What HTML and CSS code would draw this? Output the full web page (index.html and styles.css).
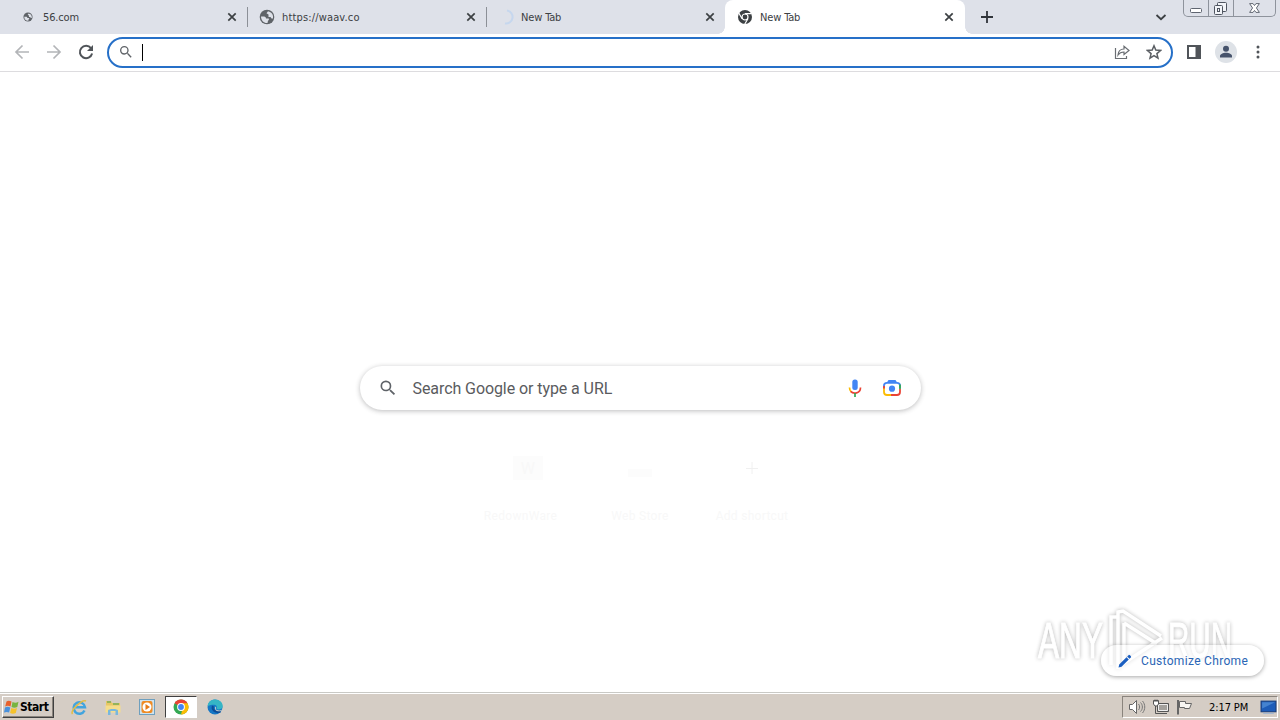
FILE: index.html
```html
<!doctype html>
<html lang="en">
<head>
  <meta charset="UTF-8">
  <meta name="viewport" content="width=device-width, initial-scale=1.0">
  <title>New Tab</title>
  <link rel="stylesheet" href="styles.css">
</head>
<body>

<svg class="defs" width="0" height="0">
  <symbol id="close" viewBox="0 0 16 16"><path d="M4.3 4.3l7.4 7.4M11.7 4.3l-7.4 7.4" stroke="#3c4043" stroke-width="1.7"/></symbol>
  <symbol id="globe" viewBox="0 0 16 16">
    <circle cx="8" cy="8" r="7.3" fill="#5f6368"/>
    <path d="M2 7.500h3c1.500 0 2 1 2 2h2.500c.8 0 .5 2-.5 2.200L8.500 14C5 14.300 2 11.500 2 7.500zM9 2.300L7.500 4.200 9.500 5.500V8h2l1 1.500H14V7c-.5-2.500-2-4-5-4.700z" fill="#dee1e9"/>
  </symbol>
  <symbol id="search" viewBox="0 0 24 24"><path fill="#5f6368" d="M15.5 14h-.79l-.28-.27A6.47 6.470 0 0 0 16 9.500 6.500 6.500 0 1 0 9.500 16c1.610 0 3.090-.59 4.230-1.570l.27.28v.79l5 4.990L20.490 19l-4.990-5zm-6 0A4.500 4.500 0 1 1 9.500 5a4.500 4.500 0 0 1 0 9z"/></symbol>
  <symbol id="arrow" viewBox="0 0 16 16"><path d="M15 8H2.500M8.500 1.500L2 8l6.500 6.500" fill="none" stroke="#b3b5b8" stroke-width="1.700"/></symbol>
</svg>

<header class="tabstrip">
  <div class="tab">
    <svg class="favicon small" viewBox="0 0 16 16"><use href="#globe"/></svg>
    <span>56.com</span>
    <svg class="close"><use href="#close"/></svg>
  </div>
  <div class="tab wide">
    <svg class="favicon"><use href="#globe"/></svg>
    <span>https://waav.co</span>
    <svg class="close"><use href="#close"/></svg>
  </div>
  <div class="tab last">
    <svg class="favicon" viewBox="0 0 16 16"><path d="M9 1.500a6.500 6.500 0 0 1-2 13" fill="none" stroke="#c6d7ee" stroke-width="2"/></svg>
    <span>New Tab</span>
    <svg class="close"><use href="#close"/></svg>
  </div>
  <div class="tab active">
    <svg class="favicon" viewBox="0 0 16 16">
      <circle cx="8" cy="8" r="7" fill="#3c4043"/>
      <circle cx="8" cy="8" r="3" fill="none" stroke="#fff" stroke-width="1.200"/>
      <path d="M8 4.600h6.500M5.100 9.700L1.800 4M10.900 9.700L7.700 15.300" stroke="#fff" stroke-width="1.200"/>
    </svg>
    <span>New Tab</span>
    <svg class="close"><use href="#close"/></svg>
  </div>
  <svg class="new-tab" viewBox="0 0 16 16"><path d="M8 2v12M2 8h12" stroke="#30343a" stroke-width="1.800"/></svg>
  <svg class="tab-search" viewBox="0 0 12 12"><path d="M1.500 4L6 8.200 10.500 4" fill="none" stroke="#3c4043" stroke-width="1.800"/></svg>
  <div class="window-controls">
    <svg viewBox="0 0 24 16"><rect x="6.500" y="8.500" width="11" height="4" rx="1" fill="#fff" stroke="#5f6570"/></svg>
    <svg viewBox="0 0 24 16"><g fill="#f2f4f8" stroke="#4f5560"><rect x="8.500" y="2.500" width="9" height="9" rx="1"/><rect x="5.500" y="5.500" width="8" height="9" rx="1"/><rect x="8.500" y="8.500" width="2" height="3"/></g></svg>
    <svg class="window-close" viewBox="0 0 42 16"><path d="M16 3.500h3.500L21 5.500l1.500-2H26L23 8l3 4.500h-3.500l-1.500-2-1.500 2H16L19 8z" fill="#fff" stroke="#5f6570"/></svg>
  </div>
</header>

<nav class="toolbar">
  <svg class="nav-icon" viewBox="0 0 16 16"><use href="#arrow"/></svg>
  <svg class="nav-icon forward" viewBox="0 0 16 16"><use href="#arrow"/></svg>
  <svg class="nav-icon" viewBox="0 0 16 16"><path d="M13 4.200A6.200 6.200 0 1 0 14.100 9.500" fill="none" stroke="#505459" stroke-width="2"/><path d="M15 1v6H9z" fill="#505459"/></svg>
  <div class="omnibox">
    <svg class="omni-search"><use href="#search"/></svg>
    <span class="caret"></span>
    <svg class="omni-icon share" viewBox="0 0 16 16"><path d="M1.500 4v10.500h11V12M4 11c.3-4 2.500-6 6-6V2.300L15 6.500l-5 4V8c-3 0-4.500.8-6 3z" fill="none" stroke="#6a6e73" stroke-width="1.200"/></svg>
    <svg class="omni-icon" viewBox="0 0 16 16"><path d="M8 1.800l1.800 4.300 4.700.4-3.600 3.100 1.100 4.600L8 11.700l-4 2.500 1.100-4.600-3.600-3.100 4.700-.4z" fill="none" stroke="#5a5e63" stroke-width="1.500"/></svg>
  </div>
  <svg class="side-panel" viewBox="0 0 16 16"><path d="M1 1h14v14H1zM3 3v10h6.500V3z" fill="#505459" fill-rule="evenodd"/></svg>
  <svg class="avatar" viewBox="0 0 22 22"><circle cx="11" cy="11" r="11" fill="#dee2e7"/><circle cx="11" cy="7.700" r="3" fill="#46536b"/><path d="M5 16.500v-1.500c0-2 3-3.300 6-3.300s6 1.300 6 3.300v1.500z" fill="#46536b"/></svg>
  <svg class="menu" viewBox="0 0 4 16"><g fill="#505459"><circle cx="2" cy="3" r="1.500"/><circle cx="2" cy="8" r="1.500"/><circle cx="2" cy="13" r="1.500"/></g></svg>
</nav>

<main class="page">
  <div class="searchbox">
    <svg class="search-icon"><use href="#search"/></svg>
    <span>Search Google or type a URL</span>
    <svg class="mic" viewBox="0 0 20 20">
      <rect x="7.300" y="1.500" width="5.400" height="10.500" rx="2.500" fill="#4285f4"/>
      <path d="M4.500 9.500c0 2.200.8 3.500 1.700 4.300" fill="none" stroke="#fbbc04" stroke-width="1.700"/>
      <path d="M5.700 13.400C8.500 16.500 15.500 15.500 15.500 9.500" fill="none" stroke="#ea4335" stroke-width="1.700"/>
      <path d="M10 15v4" stroke="#34a853" stroke-width="1.700"/>
    </svg>
    <svg class="lens" viewBox="0 0 20 20" fill="none" stroke-width="1.800">
      <path d="M2 10V7.500C2 5.500 3 4.800 5 4.800h10c2 0 3 .7 3 2.700V10" stroke="#4285f4"/>
      <path d="M6 4.300L7 2.900h6l1 1.400" fill="#4285f4" stroke="#4285f4"/>
      <path d="M18 6.500V11" stroke="#34a853"/>
      <path d="M2 8v3" stroke="#ea4335"/>
      <path d="M2 10.500V14c0 2.200 1 3 3 3h4" stroke="#fbbc04"/>
      <path d="M9 17h6c2 0 3-.8 3-3v-3" stroke="#ea4335"/>
      <circle cx="10" cy="10.700" r="3.100" fill="#4285f4"/>
    </svg>
  </div>
  <div class="shortcuts">
    <div class="shortcut"><div class="tile letter">W</div><span class="long">RedownWare</span></div>
    <div class="shortcut"><div class="tile"><i></i></div><span>Web Store</span></div>
    <div class="shortcut">
      <div class="tile"><svg width="14" height="14"><path d="M7 1v12M1 7.500h12" stroke="#f0f0f0"/></svg></div>
      <span>Add shortcut</span>
    </div>
  </div>
  <button class="customize">
    <svg viewBox="0 0 16 16"><path d="M1.500 14.500l.7-3L9.500 4.200l2.300 2.300-7.300 7.300zM10.200 3.500l1.600-1.600c.5-.5 2.800 1.800 2.300 2.300l-1.600 1.600z" fill="#1b5fc1"/></svg>
    Customize Chrome
  </button>
</main>

<footer class="taskbar">
  <button class="start">
    <svg viewBox="0 0 16 16">
      <path d="M2.500 2.500C4 1.300 5.500 1.500 7.500 2.500l-1 5C4.500 6.500 3 6.500 1.200 7.500z" fill="#e8612c"/>
      <path d="M8.500 3c2 1 4 1 6-.2l-1.200 5.200c-2 1-3.800 1-5.800 0z" fill="#77b43f"/>
      <path d="M1 8.500c2-1 3.500-.8 5.300 0l-1.200 5C3.500 12.700 2 12.700 0 13.500z" fill="#4a91dc"/>
      <path d="M7.300 9c2 1 3.800 1 5.700 0l-1.200 5c-2 1-3.700 1-5.700 0z" fill="#f5c22c"/>
    </svg>Start
  </button>
  <div class="launcher">
    <svg viewBox="0 0 18 18"><path d="M14.500 12.500A5.700 5.700 0 1 1 15 9.300H5" fill="none" stroke="#42a4de" stroke-width="2.500"/><path d="M2.500 16C-.5 13 12 1 16 3" fill="none" stroke="#e4bd45" stroke-width="1.500"/></svg>
  </div>
  <div class="launcher">
    <svg viewBox="0 0 18 18"><path d="M2 3h5l1 2h8v9H2z" fill="#e8c765"/><path d="M3 4h4M9 6h6" stroke="#78ad58" stroke-width="1.500"/><path d="M1.500 7.500h15v7h-15z" fill="#f5dd8c"/><path d="M4 17v-4.500c0-2 10-2 10 0V17h-2.500v-4h-5v4z" fill="#78b7dd"/></svg>
  </div>
  <div class="launcher">
    <svg viewBox="0 0 18 18"><rect x="1.500" y="1.500" width="15" height="15" fill="#cfe3ef" stroke="#6e9fbe"/><rect x="3.500" y="3" width="11" height="12" rx="2" fill="#ef8b24"/><circle cx="9" cy="9" r="4.500" fill="#fff"/><path d="M7.500 6v6l4.500-3z" fill="#e67a17"/></svg>
  </div>
  <div class="launcher running">
    <svg viewBox="0 0 18 18"><circle cx="9" cy="9" r="7.500" fill="#34a853"/><path d="M2.500 5.250A7.500 7.500 0 0 1 15.500 5.250L9 9z" fill="#ea4335"/><path d="M15.500 5.250A7.500 7.500 0 0 1 9 16.500L11 9 9 5.250z" fill="#fbbc04"/><circle cx="9" cy="9" r="3.900" fill="#fff"/><circle cx="9" cy="9" r="2.900" fill="#4285f4"/></svg>
  </div>
  <div class="launcher">
    <svg viewBox="0 0 18 18"><circle cx="9" cy="9" r="7.500" fill="#1677c5"/><path d="M1.600 8C2 3.500 5.500 1.400 9 1.400c4.500 0 8 3 7.700 6.800-.2 3.300-4.700 4-6.200 2.500C12 8 9.500 4.800 1.600 8z" fill="#35b5c5"/><path d="M7 8c-1.500 3.500 2 7 7.500 5.500" fill="none" stroke="#0c4b96" stroke-width="2"/><path d="M9.300 8.500c2 1-.5 2.500 1.500 3.500 2 .9 4.200.4 5.200-.5l-.5 1.200c-3 1.500-7.500.5-6.200-4.200z" fill="#d5cec6"/></svg>
  </div>
  <div class="tray">
    <svg viewBox="0 0 18 16"><path d="M1.500 5.500h3l4-4v13l-4-4h-3z" fill="#fff" stroke="#666"/><path d="M10.500 5c1.500 1.500 1.500 4.500 0 6M12.500 3.500c2.500 2.500 2.500 6.500 0 9M14.500 2c3 3.500 3 8.500 0 12" fill="none" stroke="#777"/></svg>
    <svg viewBox="0 0 18 16"><path d="M5.500 4.500h11v8h-11z" fill="#a4a19d" stroke="#555"/><path d="M6.500 5.500h9v6h-9z" fill="none" stroke="#eee"/><path d="M8 14.500h7M3.500 7v7.500H8" fill="none" stroke="#555"/><path d="M1.500 1.500h5V5l-1.500 2H3L1.500 5zM3 .5V3M5 .5V3" fill="#fff" stroke="#555"/></svg>
    <svg viewBox="0 0 18 16"><path d="M2 1v14.500" stroke="#666" stroke-width="2"/><path d="M3.500 2.500h6v2h6l-2 5H8.500v-1h-5z" fill="#f7f5f2" stroke="#666"/></svg>
    <time>2:17 PM</time>
    <svg class="show-desktop" viewBox="0 0 16 14"><rect x="1" y="1" width="14" height="10" fill="#1d5cb8" stroke="#173d7c"/><path d="M2 2h12L2 8z" fill="#4583d0"/><path d="M3 12.500h10" stroke="#9db5d2"/></svg>
  </div>
</footer>

<svg class="watermark" viewBox="0 0 200 72">
  <g font-family="Liberation Sans" font-size="50">
    <text x="2" y="53" textLength="65" lengthAdjust="spacingAndGlyphs">ANY</text>
    <text x="132" y="53" textLength="64" lengthAdjust="spacingAndGlyphs">RUN</text>
  </g>
  <path d="M75 60V12l7 0M82 64V7l5-1 38 25M88 18v40l38-25M88 18l33 21" fill="none" stroke-width="3.500"/>
</svg>

</body>
</html>
```
FILE: styles.css
```css
* {
  box-sizing: border-box;
}

body {
  margin: 0;
  width: 1280px;
  height: 720px;
  overflow: hidden;
  display: flex;
  flex-direction: column;
  background: #fff;
  font-family: "DejaVu Sans Condensed", "DejaVu Sans", sans-serif;
  font-size: 11px;
  color: #3c4043;
}

svg {
  display: block;
  flex: none;
}

.defs {
  position: absolute;
}

button {
  border: none;
  margin: 0;
  font: inherit;
}

.tabstrip {
  height: 34px;
  padding-left: 8px;
  display: flex;
  align-items: center;
  background: #dee1e9;
}

.tab {
  width: 239px;
  height: 20px;
  padding: 0 7px 0 12px;
  display: flex;
  align-items: center;
  box-shadow: 1px 0 #8c9097;
}

.tab span {
  flex: 1;
  margin-left: 7px;
  letter-spacing: -0.15px;
  white-space: nowrap;
}

.tab.wide span {
  letter-spacing: 0.15px;
}

.tab.last {
  box-shadow: none;
}

.tab.active {
  position: relative;
  height: 34px;
  width: 240px;
  padding-right: 8px;
  border-radius: 8px 8px 0 0;
  background: #fff;
  box-shadow: none;
}

/* rounded feet of the active tab */
.tab.active::before,
.tab.active::after {
  content: "";
  position: absolute;
  bottom: 0;
  width: 7px;
  height: 7px;
}

.tab.active::before {
  left: -7px;
  background: radial-gradient(circle at 0 0, transparent 6.5px, #fff 7px);
}

.tab.active::after {
  right: -7px;
  background: radial-gradient(circle at 100% 0, transparent 6.5px, #fff 7px);
}

.favicon,
.close {
  width: 16px;
  height: 16px;
}

.favicon.small {
  padding: 3px;
}

.new-tab {
  width: 16px;
  height: 16px;
  margin-left: 14px;
}

.tab-search {
  width: 12px;
  height: 12px;
  margin-left: auto;
}

.window-controls {
  display: flex;
  align-self: flex-start;
  width: 93px;
  height: 17px;
  margin: 0 4px 0 16px;
  border: 1px solid #8e939c;
  border-top: none;
  border-radius: 0 0 5px 5px;
}

.window-controls svg {
  width: 25px;
  height: 16px;
  border-right: 1px solid #8e939c;
}

.window-controls .window-close {
  width: 41px;
  border: none;
}

.toolbar {
  height: 38px;
  padding: 0 20px 1px 14px;
  display: flex;
  align-items: center;
  border-bottom: 1px solid #dddcdf;
}

.nav-icon {
  width: 16px;
  height: 16px;
  margin-right: 16px;
}

.forward {
  transform: scaleX(-1);
}

.omnibox {
  width: 1066px;
  height: 31px;
  margin-left: -3px;
  padding: 0 9px;
  display: flex;
  align-items: center;
  border: 2px solid #2670c8;
  border-radius: 16px;
}

.omni-search {
  width: 16px;
  height: 16px;
}

.caret {
  width: 1px;
  height: 17px;
  margin-left: 8px;
  background: #000;
}

.omni-icon {
  width: 16px;
  height: 16px;
}

.share {
  margin: 0 16px 0 auto;
}

.side-panel {
  width: 16px;
  height: 16px;
  margin-left: 13px;
}

.avatar {
  width: 22px;
  height: 22px;
  margin-left: 13px;
}

.menu {
  width: 4px;
  height: 16px;
  margin-left: auto;
}

.page {
  flex: 1;
  display: flex;
  flex-direction: column;
  align-items: center;
  padding-top: 294px;
}

.searchbox {
  width: 561px;
  height: 44px;
  flex: none;
  padding: 0 19px 0 18px;
  display: flex;
  align-items: center;
  border-radius: 22px;
  box-shadow: 0 1px 5px rgba(32, 33, 36, 0.3);
  font: 16px Roboto, sans-serif;
  color: #5a5b5e;
}

.search-icon {
  width: 20px;
  height: 20px;
}

.searchbox span {
  flex: 1;
  margin-left: 15px;
  padding-top: 1px;
  letter-spacing: -0.08px;
}

.mic,
.lens {
  width: 20px;
  height: 20px;
}

.lens {
  margin-left: 17px;
}

.shortcuts {
  display: flex;
  margin-top: 46px;
  color: #f8f8f8;
  font: 12px Roboto, sans-serif;
  letter-spacing: 0.3px;
}

.shortcut {
  width: 112px;
  display: flex;
  flex-direction: column;
  align-items: center;
}

.shortcut .long {
  margin-right: 15px;
}

.tile {
  width: 30px;
  height: 24px;
  margin-bottom: 29px;
  display: flex;
  align-items: center;
  justify-content: center;
}

.tile.letter {
  background: #fcfcfc;
  font-size: 16px;
}

.tile i {
  width: 24px;
  height: 8px;
  margin-top: 10px;
  background: #fcfcfc;
}

/* translucent, the watermark shows through it */
.customize {
  position: relative;
  z-index: 2;
  width: 163px;
  height: 31px;
  margin: auto 16px 16px auto;
  padding: 0 0 0 16px;
  display: flex;
  align-items: center;
  gap: 8px;
  border-radius: 16px;
  background: rgba(255, 255, 255, 0.55);
  box-shadow: 0 1px 4px rgba(0, 0, 0, 0.35);
  color: #2a65b5;
  font: 12px Roboto, sans-serif;
  letter-spacing: 0.32px;
  white-space: nowrap;
}

.customize svg {
  width: 16px;
  height: 16px;
}

.taskbar {
  height: 28px;
  padding: 0 2px 1px 2px;
  display: flex;
  align-items: center;
  border-top: 1px solid #c9c9c5;
  box-shadow: inset 0 1px #fff;
  background: #d5cdc5;
  color: #000;
}

.start {
  width: 52px;
  height: 22px;
  margin: 2px 9px 0 0;
  padding: 0 1px;
  display: flex;
  align-items: center;
  border: 1px solid;
  border-color: #fff #404040 #404040 #fff;
  box-shadow: inset -1px -1px #8a847d;
  background: #d5cdc5;
  color: #000;
  font-weight: bold;
  font-size: 12px;
  letter-spacing: -0.45px;
}

.start svg {
  width: 16px;
  height: 16px;
}

.launcher {
  width: 32px;
  height: 22px;
  margin: 2px 2px 0 0;
  display: flex;
  align-items: center;
  justify-content: center;
}

.launcher svg {
  width: 18px;
  height: 18px;
}

.running {
  background: #fff;
  border: 1px solid;
  border-color: #404040 #fff #fff #404040;
}

.tray {
  width: 156px;
  height: 22px;
  margin: 2px 0 0 auto;
  padding-left: 5px;
  display: flex;
  align-items: center;
  border: 1px solid;
  border-color: #8a847d #fff #fff #8a847d;
}

.tray svg {
  width: 18px;
  height: 16px;
  margin-right: 6px;
}

.tray time {
  margin-left: 9px;
  width: 50px;
  letter-spacing: -0.1px;
  white-space: nowrap;
}

.tray .show-desktop {
  width: 17px;
  height: 15px;
  margin: 0 0 0 auto;
}

.watermark {
  position: absolute;
  z-index: 1;
  left: 1036px;
  top: 605px;
  width: 200px;
  height: 72px;
  fill: #fff;
  stroke: #fff;
  filter: drop-shadow(0 0 2px rgba(0, 0, 0, 0.4));
  opacity: 0.7;
  pointer-events: none;
}
```
